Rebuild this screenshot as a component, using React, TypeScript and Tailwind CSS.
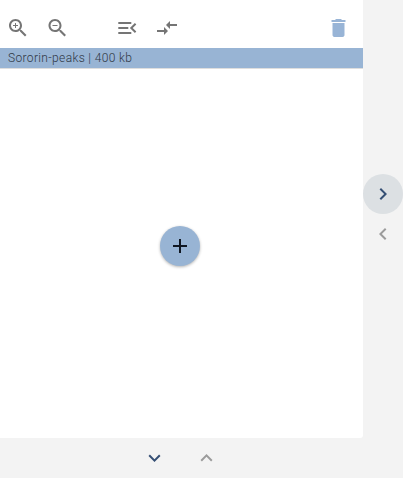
import type { ReactNode } from "react";

const paths = {
  zoomIn:
    "M15.5 14h-.79l-.28-.27C15.41 12.59 16 11.11 16 9.5 16 5.91 13.09 3 9.5 3S3 5.91 3 9.5 5.91 16 9.5 16c1.61 0 3.09-.59 4.23-1.57l.27.28v.79l5 4.99L20.49 19l-4.99-5zm-6 0C7.01 14 5 11.99 5 9.5S7.01 5 9.5 5 14 7.01 14 9.5 11.99 14 9.5 14zM12 10h-2v2H9v-2H7V9h2V7h1v2h2v1z",
  zoomOut:
    "M15.5 14h-.79l-.28-.27C15.41 12.59 16 11.11 16 9.5 16 5.91 13.09 3 9.5 3S3 5.91 3 9.5 5.91 16 9.5 16c1.61 0 3.09-.59 4.23-1.57l.27.28v.79l5 4.99L20.49 19l-4.99-5zm-6 0C7.01 14 5 11.99 5 9.5S7.01 5 9.5 5 14 7.01 14 9.5 11.99 14 9.5 14zM7 9h5v1H7z",
  menuOpen:
    "M3 18h13v-2H3v2zm0-5h10v-2H3v2zm0-7v2h13V6H3zm18 9.59L17.42 12 21 8.41 19.59 7l-5 5 5 5L21 15.59z",
  compare:
    "M9.01 14H2v2h7.01v3L13 15l-3.99-4v3zm5.98-1v-3H22V8h-7.01V5L11 9l3.99 4z",
  trash: "M6 19c0 1.1.9 2 2 2h8c1.1 0 2-.9 2-2V7H6v12zM19 4h-3.5l-1-1h-5l-1 1H5v2h14V4z",
  add: "M19 13h-6v6h-2v-6H5v-2h6V5h2v6h6v2z",
  right: "M10 6L8.59 7.41 13.17 12l-4.58 4.59L10 18l6-6z",
  left: "M15.41 7.41L14 6l-6 6 6 6 1.41-1.41L10.83 12z",
  down: "M16.59 8.59L12 13.17 7.41 8.59 6 10l6 6 6-6z",
  up: "M12 8l-6 6 1.41 1.41L12 10.83l4.59 4.58L18 14z",
};

function Icon({ name }: { name: keyof typeof paths }) {
  return (
    <svg viewBox="0 0 24 24" className="size-6 shrink-0 fill-current">
      <path d={paths[name]} />
    </svg>
  );
}

function IconButton({ label, className, children }: { label: string; className: string; children: ReactNode }) {
  return (
    <button aria-label={label} className={`flex shrink-0 items-center justify-center ${className}`}>
      {children}
    </button>
  );
}

export default function App() {
  return (
    <div className="flex h-[478px] w-[403px] flex-col overflow-hidden bg-[#f3f3f3] font-['Roboto',sans-serif]">
      <div className="flex h-[438px]">
        <section className="flex w-[363px] flex-col rounded-br-[3px] bg-white">
          <div className="flex h-12 items-center pt-2 pr-[13px] pl-[6px] text-[#757575]">
            <IconButton label="Zoom in" className="size-6"><Icon name="zoomIn" /></IconButton>
            <IconButton label="Zoom out" className="ml-[15px] size-6 translate-x-[0.5px]"><Icon name="zoomOut" /></IconButton>
            <IconButton label="Align" className="ml-[46px] size-6 translate-x-[0.3px]"><Icon name="menuOpen" /></IconButton>
            <IconButton label="Compare" className="ml-4 size-6"><Icon name="compare" /></IconButton>
            <IconButton label="Delete" className="ml-auto size-6 translate-x-[0.5px] text-[#98b4d6]"><Icon name="trash" /></IconButton>
          </div>
          <div className="flex h-[21px] items-center border-b border-[#dedede] bg-[#98b4d4] bg-clip-padding pl-2 text-xs font-light tracking-[0.35px] text-[#2f3744]">
            Sororin-peaks | 400 kb
          </div>
          <div className="flex flex-1 items-center justify-center pb-[15px] pr-[3px]">
            <IconButton
              label="Add"
              className="size-10 rounded-full bg-[#98b4d4] text-[#101722] shadow-[0_1px_3px_rgba(0,0,0,0.3)]"
            >
              <Icon name="add" />
            </IconButton>
          </div>
        </section>
        <nav className="flex w-10 flex-col pt-[174px]">
          <IconButton label="Expand right" className="size-10 rounded-full bg-[#dce0e3] text-[#354f74]"><Icon name="right" /></IconButton>
          <IconButton label="Collapse left" className="size-10 text-[#9b9b9b]"><Icon name="left" /></IconButton>
        </nav>
      </div>
      <footer className="flex h-10 items-center gap-7 pl-[142px]">
        <IconButton label="Expand down" className="size-6 translate-x-[0.5px] text-[#354f74]"><Icon name="down" /></IconButton>
        <IconButton label="Collapse up" className="size-6 translate-x-[0.5px] text-[#9b9b9b]"><Icon name="up" /></IconButton>
      </footer>
    </div>
  );
}
